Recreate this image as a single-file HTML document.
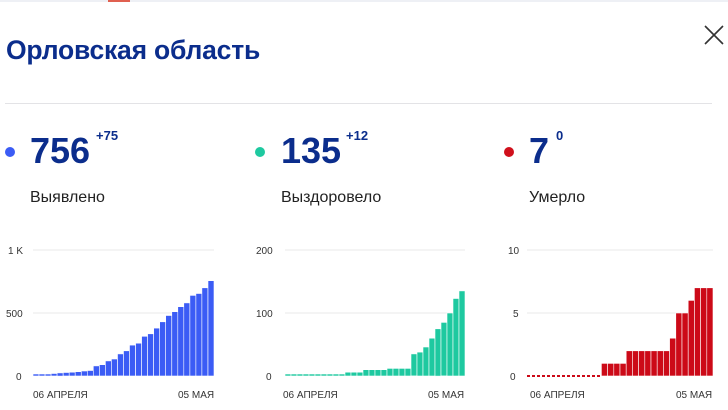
<!DOCTYPE html>
<html><head><meta charset="utf-8"><style>
body{margin:0;width:728px;height:410px;background:#fff;overflow:hidden;font-family:"Liberation Sans",sans-serif;position:relative}
.t{position:absolute}
</style></head><body>
<div class="t" style="left:0;top:0;width:728px;height:2px;background:#eef0f5"></div>
<div class="t" style="left:108px;top:0;width:22px;height:2px;background:#e06050"></div>
<div class="t" style="left:6px;top:35px;font-size:26.5px;font-weight:bold;color:#0b2d8c;letter-spacing:-0.2px">Орловская область</div>
<svg class="t" style="left:701px;top:22px" width="26" height="26"><path d="M4 4L22 22M22 4L4 22" stroke="#333" stroke-width="1.6"/></svg>
<div class="t" style="left:5px;top:103px;width:707px;height:1px;background:#e3e3e6"></div>

<div class="t" style="left:5px;top:147px;width:10px;height:10px;border-radius:50%;background:#3b5cf5"></div>
<div class="t" style="left:30px;top:130px;font-size:36px;font-weight:bold;color:#0b2d8c">756</div>
<div class="t" style="left:96px;top:128px;font-size:13px;font-weight:bold;color:#0b2d8c">+75</div>
<div class="t" style="left:30px;top:189px;font-size:16px;color:#222">Выявлено</div>

<div class="t" style="left:255px;top:147px;width:10px;height:10px;border-radius:50%;background:#1ec9a0"></div>
<div class="t" style="left:281px;top:130px;font-size:36px;font-weight:bold;color:#0b2d8c">135</div>
<div class="t" style="left:346px;top:128px;font-size:13px;font-weight:bold;color:#0b2d8c">+12</div>
<div class="t" style="left:281px;top:189px;font-size:16px;color:#222">Выздоровело</div>

<div class="t" style="left:504px;top:147px;width:10px;height:10px;border-radius:50%;background:#d0101c"></div>
<div class="t" style="left:529px;top:130px;font-size:36px;font-weight:bold;color:#0b2d8c">7</div>
<div class="t" style="left:556px;top:128px;font-size:13px;font-weight:bold;color:#0b2d8c">0</div>
<div class="t" style="left:529px;top:189px;font-size:16px;color:#222">Умерло</div>

<svg class="t" style="left:0;top:0" width="728" height="410" font-family="Liberation Sans, sans-serif" font-size="10" fill="#333">
<g stroke="#e8e8ea" stroke-width="1">
<line x1="33" y1="250" x2="214" y2="250"/><line x1="33" y1="313" x2="214" y2="313"/>
<line x1="285" y1="250" x2="465" y2="250"/><line x1="285" y1="313" x2="465" y2="313"/>
<line x1="527" y1="250" x2="713" y2="250"/><line x1="527" y1="313" x2="713" y2="313"/>
</g>
<text x="8" y="254">1 K</text><text x="6" y="317">500</text><text x="16" y="380">0</text>
<text x="256" y="254">200</text><text x="256" y="317">100</text><text x="266" y="380">0</text>
<text x="508" y="254">10</text><text x="513" y="317">5</text><text x="510" y="380">0</text>
<text x="33" y="398">06 АПРЕЛЯ</text><text x="178" y="398">05 МАЯ</text>
<text x="283" y="398">06 АПРЕЛЯ</text><text x="428" y="398">05 МАЯ</text>
<text x="530" y="398">06 АПРЕЛЯ</text><text x="676" y="398">05 МАЯ</text>
<g id="b" fill="#3b5cf5" stroke="#fff" stroke-width="0.6"></g>
<g id="g" fill="#1ec9a0" stroke="#fff" stroke-width="0.6"></g>
<g id="r" fill="#cc0a18" stroke="#fff" stroke-width="0.6"></g>
<line x1="527" y1="376" x2="601" y2="376" stroke="#cc0a18" stroke-width="2" stroke-dasharray="3,2"/>
</svg>
<script>
function bars(id,x0,x1,vals,max,dz){var g=document.getElementById(id),w=(x1-x0)/vals.length,s='';
vals.forEach(function(v,i){if(v<=0)return;var h=v/max*126;if(h<dz)h=dz;s+='<rect x="'+(x0+i*w).toFixed(1)+'" y="'+(376-h).toFixed(1)+'" width="'+w.toFixed(1)+'" height="'+h.toFixed(1)+'"/>';});g.innerHTML=s;}
bars('b',33,214,[12,14,16,20,25,28,30,34,40,44,80,90,120,135,175,200,245,260,315,335,380,430,480,510,550,580,640,655,700,756],1000,2);
bars('g',285,465,[2,2,2,3,3,3,3,3,3,3,6,6,6,10,10,10,10,12,12,12,12,35,38,46,60,75,85,100,123,135],200,2);
bars('r',527,713,[0,0,0,0,0,0,0,0,0,0,0,0,1,1,1,1,2,2,2,2,2,2,2,3,5,5,6,7,7,7],10,2);
</script>
</body></html>
